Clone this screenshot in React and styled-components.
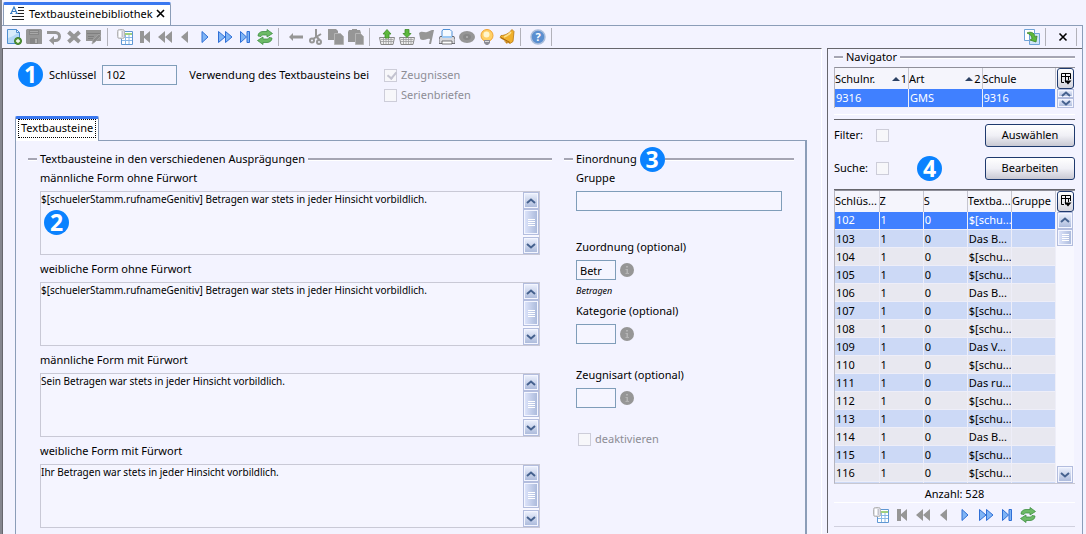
import { useState } from 'react';
import styled, { createGlobalStyle, css } from 'styled-components';

const GlobalStyle = createGlobalStyle`
  * {
    box-sizing: border-box;
  }

  body {
    margin: 0;
    background: #f3f3ff;
    color: #000;
    font: 11px/16px "Noto Sans", "Open Sans", sans-serif;
  }

  button, input, textarea {
    font: inherit;
    color: inherit;
    margin: 0;
  }
`

const texts = [
  { id: 'mof', label: 'männliche Form ohne Fürwort', text: '$[schuelerStamm.rufnameGenitiv] Betragen war stets in jeder Hinsicht vorbildlich.', mark: '2' },
  { id: 'wof', label: 'weibliche Form ohne Fürwort', text: '$[schuelerStamm.rufnameGenitiv] Betragen war stets in jeder Hinsicht vorbildlich.' },
  { id: 'mmf', label: 'männliche Form mit Fürwort', text: 'Sein Betragen war stets in jeder Hinsicht vorbildlich.' },
  { id: 'wmf', label: 'weibliche Form mit Fürwort', text: 'Ihr Betragen war stets in jeder Hinsicht vorbildlich.' },
]

const optionals = [
  { id: 'zuordnung', label: 'Zuordnung (optional)', value: 'Betr', hint: 'Betragen' },
  { id: 'kategorie', label: 'Kategorie (optional)', value: '' },
  { id: 'zeugnisart', label: 'Zeugnisart (optional)', value: '' },
]

const entries = [
  ['102', '$[schu...'],
  ['103', 'Das B...'],
  ['104', '$[schu...'],
  ['105', '$[schu...'],
  ['106', 'Das B...'],
  ['107', '$[schu...'],
  ['108', '$[schu...'],
  ['109', 'Das V...'],
  ['110', '$[schu...'],
  ['111', 'Das ru...'],
  ['112', '$[schu...'],
  ['113', '$[schu...'],
  ['114', 'Das B...'],
  ['115', '$[schu...'],
  ['116', '$[schu...'],
]

const G = '#969696'
const B = '#2f6fd6'

const icons = {
  add: <>
    <path d="M1.5.5h9l3 3v11h-12z" fill="#d9ecfb" stroke="#4f8fd0" />
    <path d="M2 9c4-1 7-3 11-6v11H2z" fill="#b5d8f6" />
    <path d="M10.500.5v3h3z" fill="#fff" stroke="#4f8fd0" />
    <circle cx="12" cy="12" r="3.500" fill="#58993a" stroke="#3c7a26" />
    <path d="M12 10v4M10 12h4" stroke="#fff" strokeWidth="1.300" />
  </>,
  save: <>
    <path d="M1 0h14l1 1v14H1l-1-1V1z" fill={G} />
    <path d="M3 1h10v5H3z" fill="#868686" />
    <path d="M4 2.500h8M4 4.500h8" stroke="#a8a8a8" />
    <path d="M4 9h8v6H4z" fill="#868686" />
    <path d="M9 10h2v4H9z" fill="#b0b0b0" />
  </>,
  undo: <>
    <path d="M1 3.500h8.500a4 4 0 0 1 0 8H7" fill="none" stroke={G} strokeWidth="3" />
    <path d="M8 7v9l-5-4.500z" fill={G} />
  </>,
  cancel: <path d="M2.500 3l11 10M13.500 3l-11 10" stroke={G} strokeWidth="4" />,
  edit: <>
    <path d="M0 1h15v11H0z" fill={G} />
    <path d="M1 4.500h13M2 7.500h6M2 9.500h5" stroke="#7f7f7f" />
    <path d="M6 15l1-4 6-6 2 2-6 6z" fill="#8a8a8a" stroke="#a9a9a9" strokeWidth=".7" />
  </>,
  table: <>
    <path d="M4.500 2.500h11v13h-11z" fill="#fff" stroke="#5f97d3" />
    <path d="M7 4h8v2H7z" fill="#9fd07f" />
    <path d="M5 8.500h10M5 11.500h10M8.500 6v9M12 6v9" stroke="#8ab8e6" />
    <rect x=".5" y=".5" width="7" height="9" rx="2" fill="#dedee4" stroke="#b5b5b5" />
    <path d="M3 2v6" stroke="#fff" strokeWidth="2" />
    <path d="M5.500 2v6" stroke="#c4c4cc" />
  </>,
  first: <path d="M3 2h4v12H3zM13 2v12L6 8z" fill={G} />,
  rewind: <path d="M8 2v12L1 8zM15 2v12L8 8z" fill={G} />,
  prev: <path d="M11 2v12L4 8z" fill={G} />,
  next: <path d="M5 2.500v11L11 8z" fill="#7fb4f5" stroke={B} />,
  forward: <path d="M1.500 2.500v11L8 8zM8.500 2.500v11L15 8z" fill="#7fb4f5" stroke={B} />,
  last: <path d="M3.500 2.500v11L9.500 8zM10 2.500h2.500v11H10z" fill="#7fb4f5" stroke={B} />,
  refresh: <>
    <path d="M1 7c0-3 2.500-4.500 5-4.500h4V.5l5.500 4L10 8V6H6.500C5 6 4 6.500 4 7.500z" fill="#6cba66" stroke="#3f8f43" strokeWidth=".8" />
    <path d="M15 9c0 3-2.500 4.500-5 4.500H6v2L.5 11.500 6 8v2h3.500c1.500 0 2.500-.5 2.500-1.500z" fill="#6cba66" stroke="#3f8f43" strokeWidth=".8" />
  </>,
  back: <path d="M1 8l4-4v2.500h10v3H5V12z" fill={G} />,
  cut: <g fill="none" stroke={G} strokeWidth="2">
    <path d="M8 0v7l3.500 4M13 5L5 10" />
    <circle cx="4" cy="11.500" r="2" />
    <circle cx="11" cy="13" r="2" />
  </g>,
  copy: <>
    <path d="M0 0h8l2 2v9H0z" fill={G} />
    <path d="M6.500 4.500h6l3 3v8h-9z" fill={G} stroke="#b5b5b5" />
  </>,
  paste: <>
    <path d="M1 1h3V0h5v1h3l1 3v9H0V3z" fill={G} />
    <path d="M7.500 4.500h5l3 3v8h-8z" fill={G} stroke="#b5b5b5" />
  </>,
  upload: <>
    <path d="M.5 8.500h15l-1.500 7H2z" fill="#eee" stroke="#888" />
    <path d="M2 10.500h12M2 12.500h12M4.500 9v6M7 9v6M9.500 9v6M12 9v6" stroke="#9c9c9c" strokeWidth=".8" />
    <path d="M8 .5L12 5h-2v4H6V5H4z" fill="#5cb83c" stroke="#3c8a27" strokeWidth=".8" />
  </>,
  download: <>
    <path d="M.5 8.500h15l-1.500 7H2z" fill="#eee" stroke="#888" />
    <path d="M2 10.500h12M2 12.500h12M4.500 9v6M7 9v6M9.500 9v6M12 9v6" stroke="#9c9c9c" strokeWidth=".8" />
    <path d="M8 8.500L4 4.500h2v-4h4v4h2z" fill="#5cb83c" stroke="#3c8a27" strokeWidth=".8" />
  </>,
  flag: <path d="M0 4c3-3 5 0 8-1 2-.5 3-1.500 5-2h2l-3 14h-2l1-5c-3-1-4 1-7 1-2 0-3-1-3-2z" fill={G} />,
  print: <>
    <path d="M4 .5h7l2 2V8H3V2z" fill="#f5faff" stroke="#4d8fd6" />
    <path d="M1 7.500h14l1 3v4H0v-4z" fill="#d8d8dc" stroke="#55565c" strokeWidth=".8" />
    <path d="M3 7h10v2H3z" fill="#9cc9f5" />
    <path d="M3 12h10v3H3z" fill="#fff" stroke="#555" strokeWidth=".8" />
  </>,
  disc: <>
    <ellipse cx="8" cy="8" rx="8" ry="6" fill={G} />
    <ellipse cx="8" cy="8" rx="4" ry="3" fill="#888" />
    <circle cx="8" cy="8" r="1" fill="#b5b5b5" />
  </>,
  bulb: <>
    <circle cx="8" cy="6.500" r="6" fill="#ffd065" stroke="#f0a232" />
    <circle cx="7.500" cy="5.500" r="3" fill="#fff6cf" />
    <path d="M5 11h6v3l-2 2H7l-2-2z" fill="#8c8c94" />
    <path d="M6 12.500h4" stroke="#ddd" />
  </>,
  bell: <>
    <path d="M13 .5l2 2-1 10-3 2L1 8.500l1-2c4 0 8-2 11-6z" fill="#f0b02c" stroke="#b9770f" strokeWidth=".8" />
    <path d="M2 8.500l9 5" stroke="#a8680b" />
    <path d="M5 12l3 3 1-2z" fill="#c98616" />
    <path d="M12 3c-2 3-4 4-7 5" stroke="#ffe08a" fill="none" strokeWidth="1.500" />
  </>,
  export: <>
    <path d="M.5.5h10v11H.5z" fill="#fff" stroke="#6fa3d8" />
    <path d="M5.500 4.500h10v11h-10z" fill="#cfe5f8" stroke="#6fa3d8" />
    <path d="M3 4c4-2 8 0 8 4l2-1-1 6-6-2 2-1c0-3-2-5-5-6z" fill="#5cb83c" stroke="#3b8528" strokeWidth=".8" />
  </>,
  close: <path d="M4.500 4.500l7 7M11.500 4.500l-7 7" stroke="#000" strokeWidth="1.600" />,
  text: <>
    <path d="M8 1.500h6M8 4.500h6M8 7.500h6M2 10.500h12M2 13.500h12" stroke="#222" />
    <path d="M1 7.500L4 1l3 6.500M2 5.500h4M0 7.500h2.500M5.500 7.500H8" fill="none" stroke="#3b7fc4" strokeWidth="1.200" />
  </>,
}

const Icon = ({ name }) => <Glyph viewBox="0 0 16 16" aria-hidden="true">{icons[name]}</Glyph>

const navButtons = [
  ['table', 'Liste'], ['first', 'Erster'], ['rewind', 'Seite zurück'], ['prev', 'Zurück'],
  ['next', 'Weiter'], ['forward', 'Seite vor'], ['last', 'Letzter'], ['refresh', 'Aktualisieren'],
]

const toolGroups = [
  [['add', 'Neu'], ['save', 'Speichern'], ['undo', 'Rückgängig'], ['cancel', 'Löschen'], ['edit', 'Bearbeiten']],
  navButtons,
  [['back', 'Zurück'], ['cut', 'Ausschneiden'], ['copy', 'Kopieren'], ['paste', 'Einfügen']],
  [['upload', 'Export'], ['download', 'Import'], ['flag', 'Markieren'], ['print', 'Drucken'], ['disc', 'Ansicht'], ['bulb', 'Hinweis'], ['bell', 'Erinnerung']],
]

function Tools({ items }) {
  return items.map(([icon, title]) => (
    <ToolButton key={icon} type="button" aria-label={title}><Icon name={icon} /></ToolButton>
  ))
}

function Scroller() {
  return (
    <ScrollBar>
      <ScrollButton type="button" aria-label="nach oben">
        <Chevron viewBox="0 0 10 6"><path d="M1 5l4-3.500L9 5" /></Chevron>
      </ScrollButton>
      <Thumb><i /><i /><i /><i /></Thumb>
      <Spacer />
      <ScrollButton type="button" aria-label="nach unten">
        <Chevron viewBox="0 0 10 6"><path d="M1 1l4 3.500L9 1" /></Chevron>
      </ScrollButton>
    </ScrollBar>
  )
}

function ColumnControl() {
  return (
    <ColumnButton type="button" aria-label="Spalten">
      <svg width="12" height="14" viewBox="0 0 12 14" fill="none" stroke="#000">
        <path d="M4 10.500H1.500v-9h9V7M1.500 4.500h9M5.500 1.500v9M8.500 4v4" />
        <path d="M4.500 8.500h7L8 12.500z" fill="#000" stroke="none" />
      </svg>
    </ColumnButton>
  )
}

export default function App() {
  const [selected, setSelected] = useState('102')

  return (
    <Window>
      <GlobalStyle />
      <TabStrip>
        <DocTab>
          <Icon name="text" />
          Textbausteinebibliothek
          <CloseTab type="button" aria-label="Schließen">
            <svg width="9" height="9" viewBox="0 0 9 9"><path d="M1 1l7 7M8 1L1 8" stroke="#000" strokeWidth="1.600" /></svg>
          </CloseTab>
        </DocTab>
      </TabStrip>
      <Frame>
        <Toolbar>
          {toolGroups.map((items, i) => (
            <ToolGroup key={i}>
              <Tools items={items} />
              <Separator />
            </ToolGroup>
          ))}
          <ToolButton type="button" aria-label="Hilfe">
            <Help viewBox="0 0 16 16">
              <circle cx="8" cy="8" r="7" fill="#5b8fd0" stroke="#a9bddb" strokeWidth="1.500" />
              <text x="8" y="12" textAnchor="middle">?</text>
            </Help>
          </ToolButton>
          <Separator />
          <Spacer />
          <ToolButton type="button" aria-label="Übernehmen"><Icon name="export" /></ToolButton>
          <Separator />
          <ToolButton type="button" aria-label="Navigator schließen"><Icon name="close" /></ToolButton>
          <Separator />
        </Toolbar>
        <Main>
          <Editor>
            <KeyRow>
              <Badge>1</Badge>
              <label htmlFor="key">Schlüssel</label>
              <KeyInput id="key" defaultValue="102" />
              <span>Verwendung des Textbausteins bei</span>
              <Checks>
                <CheckLabel><Check type="checkbox" defaultChecked disabled />Zeugnissen</CheckLabel>
                <CheckLabel><Check type="checkbox" disabled />Serienbriefen</CheckLabel>
              </Checks>
            </KeyRow>
            <InnerTab type="button"><span>Textbausteine</span></InnerTab>
            <Panel>
              <TextSet>
                <Legend>Textbausteine in den verschiedenen Ausprägungen</Legend>
                <Texts>
                  {texts.map(t => (
                    <Field key={t.id}>
                      <label htmlFor={t.id}>{t.label}</label>
                      <AreaBox>
                        <Area id={t.id} defaultValue={t.text} readOnly />
                        <Scroller />
                        {t.mark && <FloatBadge>{t.mark}</FloatBadge>}
                      </AreaBox>
                    </Field>
                  ))}
                </Texts>
              </TextSet>
              <OrderSet>
                <Legend>Einordnung<Badge $line>3</Badge></Legend>
                <Orders>
                  <GroupField>
                    <label htmlFor="gruppe">Gruppe</label>
                    <TextInput id="gruppe" />
                  </GroupField>
                  {optionals.map(o => (
                    <OptField key={o.id}>
                      <label htmlFor={o.id}>{o.label}</label>
                      <CodeRow>
                        <CodeInput id={o.id} defaultValue={o.value} />
                        <svg width="14" height="14" viewBox="0 0 14 14" aria-hidden="true">
                          <circle cx="7" cy="7" r="7" fill="#969696" />
                          <path d="M6 3h2v1.500H6zM5.500 6H8v4h1v1H5.500v-1h1V7h-1z" fill="#b4b4b4" />
                        </svg>
                      </CodeRow>
                      <Hint>{o.hint}</Hint>
                    </OptField>
                  ))}
                  <CheckLabel $inset><Check type="checkbox" disabled />deaktivieren</CheckLabel>
                </Orders>
              </OrderSet>
            </Panel>
          </Editor>
          <Navigator>
            <Legend>Navigator</Legend>
            <Grid>
              <Table>
                <thead>
                  <tr>
                    <th><Sort>Schulnr.<b>1</b></Sort></th>
                    <th><Sort>Art<b>2</b></Sort></th>
                    <th>Schule</th>
                  </tr>
                </thead>
                <tbody>
                  <Row $active><td>9316</td><td>GMS</td><td>9316</td></Row>
                </tbody>
              </Table>
              <Side>
                <ColumnControl />
                <Stepper>
                  <StepButton type="button" aria-label="vorherige Schule">
                    <Chevron viewBox="0 0 10 6"><path d="M1 5l4-3.500L9 5" /></Chevron>
                  </StepButton>
                  <StepButton type="button" aria-label="nächste Schule">
                    <Chevron viewBox="0 0 10 6"><path d="M1 1l4 3.500L9 1" /></Chevron>
                  </StepButton>
                </Stepper>
              </Side>
            </Grid>
            <Filters>
              <FilterRow>
                <label htmlFor="filter">Filter:</label>
                <Check id="filter" type="checkbox" disabled />
                <ActionButton type="button">Auswählen</ActionButton>
              </FilterRow>
              <FilterRow>
                <label htmlFor="suche">Suche:</label>
                <Check id="suche" type="checkbox" disabled />
                <Badge>4</Badge>
                <ActionButton type="button">Bearbeiten</ActionButton>
              </FilterRow>
            </Filters>
            <Grid $fill>
              <Table>
                <thead>
                  <tr><th>Schlüs...</th><th>Z</th><th>S</th><th>Textba...</th><th>Gruppe</th></tr>
                </thead>
                <tbody>
                  {entries.map(([key, text]) => (
                    <Row key={key} $active={key === selected} onClick={() => setSelected(key)}>
                      <td>{key}</td><td>1</td><td>0</td><td>{text}</td><td />
                    </Row>
                  ))}
                  <Row><td /><td /><td /><td /><td /></Row>
                </tbody>
              </Table>
              <Side>
                <ColumnControl />
                <Scroller />
              </Side>
            </Grid>
            <Count>Anzahl: 528</Count>
            <NavTools><Tools items={navButtons} /></NavTools>
          </Navigator>
        </Main>
      </Frame>
    </Window>
  )
}

const Window = styled.div`
  display: flex;
  flex-direction: column;
  height: 100vh;
  overflow: hidden;
  border-left: 2px solid #85868e;
`

const Glyph = styled.svg`
  display: block;
  width: 16px;
  height: 16px;
  flex: none;
`

const Help = styled(Glyph)`
  text {
    fill: #fff;
    font: bold 11px "Noto Sans", sans-serif;
  }
`

const TabStrip = styled.div`
  display: flex;
  padding: 2px 0 0 1px;
`

const DocTab = styled.div`
  display: flex;
  align-items: center;
  gap: 3px;
  height: 23px;
  padding: 0 5px 2px 6px;
  background: #fff;
  border: 1px solid #8b9db8;
  border-top: 3px solid #3a78f0;
  border-bottom: 0;
  border-radius: 2px 2px 0 0;
`

const CloseTab = styled.button`
  display: flex;
  padding: 0 0 2px;
  border: 0;
  background: none;
`

const Frame = styled.div`
  flex: 1;
  min-height: 0;
  display: flex;
  flex-direction: column;
  margin-right: 3px;
  border-top: 1px solid #8b9db8;
  border-right: 1px solid #8b9db8;
`

const Toolbar = styled.div`
  display: flex;
  align-items: center;
  gap: 4px;
  height: 22px;
  padding: 0 0 0 4px;
`

const ToolGroup = styled.div`
  display: flex;
  align-items: center;
  gap: 4px;
`

const ToolButton = styled.button`
  display: flex;
  padding: 0;
  border: 0;
  background: none;
`

const Separator = styled.span`
  width: 1px;
  height: 18px;
  margin: 0 5px 0 1px;
  background: #b2b2ba;
`

const Spacer = styled.span`
  flex: 1;
`

const Main = styled.div`
  flex: 1;
  min-height: 0;
  display: flex;
  gap: 5px;
`

const Editor = styled.main`
  flex: 1;
  min-width: 0;
  overflow: hidden;
  padding: 13px 14px 0 12px;
  border-top: 1px solid #66666c;
  border-left: 1px solid #66666c;
  border-right: 1px solid #fff;
`

const KeyRow = styled.div`
  display: flex;
  align-items: flex-start;
  line-height: 26px;
  padding-left: 3px;

  label + input {
    margin: 3px 12px 0 6px;
  }
`

const Badge = styled.span`
  flex: none;
  width: 25px;
  height: 25px;
  border-radius: 50%;
  background: #0a82ff;
  color: #fff;
  font: bold 23px/25px "Noto Sans", sans-serif;
  text-align: center;
  margin-right: 6px;
  ${p => p.$line && css`
    margin: 0 -3px 0 0;
  `}
`

const FloatBadge = styled(Badge)`
  position: absolute;
  left: 3px;
  top: 18px;
`

const inputBox = css`
  height: 20px;
  padding: 0 3px;
  border: 1px solid #7f9db9;
  border-radius: 0;
  background: #f5f5ff;
  outline: 0;
`

const KeyInput = styled.input`
  ${inputBox}
  width: 75px;
`

const TextInput = styled.input`
  ${inputBox}
  width: 100%;
`

const CodeInput = styled.input`
  ${inputBox}
  width: 40px;
`

const Checks = styled.div`
  display: flex;
  flex-direction: column;
  padding: 3px 0 0 15px;
`

const CheckLabel = styled.label`
  display: flex;
  align-items: center;
  gap: 4px;
  height: 20px;
  line-height: 20px;
  color: #8d8d95;
  ${p => p.$inset && css`
    height: 16px;
    padding-left: 2px;
  `}
`

const Check = styled.input`
  appearance: none;
  flex: none;
  width: 13px;
  height: 13px;
  border: 1px solid #cdcdd9;
  background: #f7f7fa;

  &:checked::after {
    content: "";
    display: block;
    width: 4px;
    height: 7px;
    margin: 0 0 0 4px;
    border: solid #c3c3d0;
    border-width: 0 2px 2px 0;
    transform: rotate(40deg);
  }
`

const InnerTab = styled.button`
  position: relative;
  display: block;
  height: 25px;
  margin: 11px 0 -1px;
  padding: 0 2px 3px;
  background: #fff;
  border: 1px solid #8b9db8;
  border-top: 3px solid #3a78f0;
  border-bottom: 0;
  border-radius: 2px 2px 0 0;

  span {
    display: block;
    padding: 0 2px 2px;
    line-height: 15px;
    border: 1px dotted #000;
  }
`

const Panel = styled.div`
  display: flex;
  gap: 12px;
  height: 100%;
  padding: 10px 11px 0 12px;
  border: 1px solid #8b9db8;
  border-right-width: 2px;
`

const TextSet = styled.section`
  flex: 524;
  min-width: 0;
`

const OrderSet = styled.section`
  flex: 230;
  min-width: 0;
`

const Legend = styled.div`
  display: flex;
  align-items: center;
  gap: 3px;
  height: 16px;
  white-space: nowrap;

  &::before, &::after {
    content: "";
    width: 9px;
    height: 2px;
    background: #a5a5b3;
    border-bottom: 1px solid #fff;
  }

  &::after {
    flex: 1;
  }
`

const Texts = styled.div`
  display: flex;
  flex-direction: column;
  gap: 6px;
  padding: 3px 12px 0;
`

const Field = styled.div`
  display: flex;
  flex-direction: column;
  gap: 5px;
`

const AreaBox = styled.div`
  position: relative;
  display: flex;
  height: 64px;
  border: 1px solid #c9c9d6;
`

const Area = styled.textarea`
  flex: 1;
  min-width: 0;
  padding: 0;
  border: 0;
  outline: 0;
  resize: none;
  overflow: hidden;
  background: #f5f5ff;
  font-size: 10px;
  line-height: 15px;
`

const Orders = styled.div`
  padding: 3px 12px 0;
`

const GroupField = styled(Field)`
  margin-bottom: 28px;
`

const OptField = styled(Field)`
  height: 64px;
`

const CodeRow = styled.div`
  display: flex;
  align-items: center;
  gap: 4px;
`

const Hint = styled.em`
  font-size: 9px;
  line-height: 12px;
`

const ScrollBar = styled.div`
  display: flex;
  flex-direction: column;
  flex: 1;
  width: 16px;
  max-width: 16px;
  background: #f8f8ff;
`

const ScrollButton = styled.button`
  display: flex;
  align-items: center;
  justify-content: center;
  height: 17px;
  padding: 0;
  border: 1px solid #b3bdde;
  background: linear-gradient(#eef2fe, #a9b8da);
  box-shadow: inset 0 0 0 1px #f4f6ff;
`

const Chevron = styled.svg`
  width: 10px;
  height: 6px;
  fill: none;
  stroke: #46628f;
  stroke-width: 2;
`

const Thumb = styled.div`
  display: flex;
  flex-direction: column;
  align-items: center;
  justify-content: center;
  gap: 1px;
  height: 17px;
  border: 1px solid #b3bdde;
  background: linear-gradient(90deg, #dfe6fc, #a9b8da);
  box-shadow: inset 0 0 0 1px #f4f6ff;

  ${AreaBox} & {
    height: 26px;
  }

  i {
    width: 7px;
    height: 1px;
    background: #fff;
  }
`

const Navigator = styled.aside`
  display: flex;
  flex-direction: column;
  width: 255px;
  margin-bottom: 1px;
  padding: 0 7px 6px 6px;
  border-top: 1px solid #66666c;
  border-left: 1px solid #66666c;
`

const Grid = styled.div`
  display: flex;
  margin-top: 2px;
  border-top: 1px solid #8f8f99;
  border-left: 1px solid #b5b5c0;
  ${p => p.$fill && css`
    flex: 1;
    min-height: 0;
    margin-top: 0;
    overflow: hidden;
    border-bottom: 1px solid #c8c8d2;
  `}
`

const Table = styled.table`
  flex: 1;
  align-self: flex-start;
  table-layout: fixed;
  width: 100px;
  border-collapse: collapse;

  th, td {
    padding: 0;
    text-align: left;
    font-weight: normal;
    white-space: nowrap;
    overflow: hidden;
  }

  td {
    padding-left: 1px;
  }

  th {
    height: 21px;
    background: #f5f5fc;
    border-right: 1px solid #c5c5cf;
  }
`

const Sort = styled.div`
  display: flex;
  align-items: center;

  b {
    display: flex;
    align-items: center;
    gap: 1px;
    margin-left: auto;
    padding-right: 1px;
    font-weight: normal;
  }

  b::before {
    content: "";
    border: 4px solid transparent;
    border-top: 0;
    border-bottom: 4px solid #2d4264;
  }
`

const Row = styled.tr`
  height: 18px;
  background: #e8e8f0;

  &:nth-child(even) {
    background: #ccd9f6;
  }

  td {
    border-right: 1px solid #eeeef8;
    border-bottom: 1px solid #eeeef8;
  }

  ${p => p.$active && css`
    &, &:nth-child(even) {
      background: #4080ff;
      color: #fff;
    }
  `}
`

const Side = styled.div`
  display: flex;
  flex-direction: column;
  width: 18px;
  margin-right: 1px;
  padding-left: 1px;
  background: #f8f8ff;
`

const ColumnButton = styled.button`
  display: flex;
  align-items: center;
  justify-content: center;
  height: 21px;
  padding: 0;
  border: 1px solid #1f3a6e;
  border-radius: 3px;
  background: linear-gradient(#fff, #d4d4dd);
`

const Stepper = styled.div`
  flex: 1;
  display: flex;
  flex-direction: column;
`

const StepButton = styled(ScrollButton)`
  flex: 1;
  height: auto;
`

const Filters = styled.div`
  display: flex;
  flex-direction: column;
  gap: 10px;
  margin-top: 6px;
  padding: 4px 0 9px;
  border-top: 1px solid #fff;
  border-bottom: 1px solid #66666c;

  &::before {
    content: "";
    border-top: 1px solid #66666c;
    margin-bottom: -6px;
  }
`

const FilterRow = styled.div`
  display: flex;
  align-items: center;
  gap: 28px;
  height: 23px;

  label {
    width: 34px;
    margin-right: -20px;
    white-space: nowrap;
  }
`

const ActionButton = styled.button`
  width: 90px;
  height: 23px;
  margin-left: auto;
  border: 1px solid #1f3a6e;
  border-radius: 3px;
  background: linear-gradient(#fff, #f0f0f6 50%, #c9c9d3);
`

const Count = styled.div`
  height: 19px;
  line-height: 19px;
  text-align: center;
  border-bottom: 1px solid #fff;
`

const NavTools = styled.div`
  display: flex;
  align-items: center;
  justify-content: center;
  gap: 5px;
  height: 24px;
  border-bottom: 1px solid #d0d0de;
`
